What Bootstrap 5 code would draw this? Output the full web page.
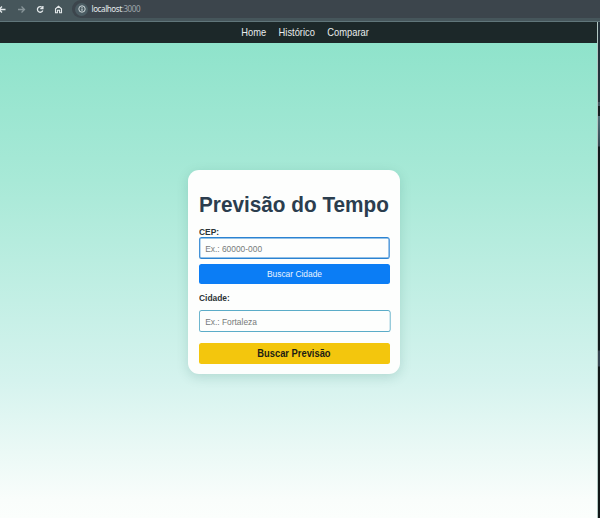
<!DOCTYPE html>
<html lang="pt-BR">
<head>
<meta charset="utf-8">
<meta name="viewport" content="width=device-width, initial-scale=1">
<title>Previsão do Tempo</title>
<link href="https://cdn.jsdelivr.net/npm/bootstrap@5.3.0/dist/css/bootstrap.min.css" rel="stylesheet">
<style>
body{font-family:"Liberation Sans",Arial,sans-serif;height:518px;background:#182222}
.browser-bar{height:22px;background:#46565b;border-bottom:1px solid #60767a;flex:none}
.browser-icons{width:72px;height:18px;padding-right:9px;color:#e4e9eb}
.browser-icons svg{width:9px;height:9px;overflow:visible;fill:none;stroke:currentColor;stroke-width:1.3}
.browser-icons .off{color:#879498}
.address{height:18px;background:#3c454c;border-radius:9px 0 0 9px;font:8px/18px "Noto Sans",sans-serif;letter-spacing:-.4px;color:#e5e9ec;padding-left:3px}
.address .info{width:13px;height:13px;border-radius:50%;background:#4b5c63;margin-right:3.5px}
.address .port{color:#a0a8ac}
.site{width:598px;border-right:1px solid #b2c8c3}
.menu{height:21px;background:#1c2829;padding-left:13.4px;font-size:10.1px;flex:none}
.menu-links{gap:13.5px;transform:scaleX(.924)}
.menu a{color:#e9eded}
.sky{background:linear-gradient(#8fe3cb 0,#a8e9d7 29%,#d5f3ee 71%,#f9fdfb 96%,#fbfefc 100%);padding-top:127px}
.edge{width:2px;background:linear-gradient(#24323a 0,#24323a 80px,#435961 80px,#435961 84px,#131d1f 84px,#131d1f 94px,#52717a 94px,#344750 124px,#11191b 125px,#11191b 328px,#34424e 329px,#34424e 344px,#101617 345px)}
.forecast{width:212px;height:204.3px;margin-left:188px;border:0;border-radius:11px;background:#fdfefd;box-shadow:0 3px 12px rgba(20,90,75,.17);padding:23px 10.5px 0}
h1{font-size:21.4px;line-height:25px;height:25px;font-weight:700;color:#2b3d4e;white-space:nowrap;transform:scaleX(.97);transform-origin:left}
.forecast label{font-size:9.5px;line-height:10px;font-weight:700;color:#2b3336;transform:scaleX(.884);transform-origin:left}
.forecast .zip-label{margin-top:9px}
.forecast .city-label{margin-top:8.5px;margin-bottom:.5px}
.forecast .form-control{height:22px;min-height:0;font-size:9.6px;line-height:18px;padding:0 6px;border-radius:2.8px/2.5px;background:#fdfefd;transform:scaleX(.875);transform-origin:left}
.forecast .form-control::placeholder{color:#777b7b;opacity:1}
.forecast .zip{border:1px solid #2b83d2;box-shadow:inset 0 0 0 .5px #2b83d2;width:218.3px}
.forecast .city{border:1px solid #5bacc8;width:219px;margin-top:7px}
.forecast .btn{padding:0;border:0;border-radius:2.5px}
.forecast .find-city span{display:inline-block;transform:scaleX(.875)}
.forecast .find-forecast span{display:inline-block;transform:scaleX(.918)}
.forecast .find-city{height:20px;margin-top:5px;font-size:9.6px;background:#0b7df5;color:#e9f4ff}
.forecast .find-forecast{height:21px;margin-top:11px;font-size:10.2px;font-weight:700;background:#f3c60d;color:#1c1d14}
</style>
<script src="https://cdn.jsdelivr.net/npm/bootstrap@5.3.0/dist/js/bootstrap.bundle.min.js" defer></script>
</head>
<body class="d-flex flex-column overflow-hidden">
<header class="browser-bar d-flex">
  <div class="browser-icons d-flex align-items-center justify-content-between">
    <svg viewBox="0 0 9 9"><path d="M5.5 4.5H-1M2 1.5l-3 3 3 3"/></svg>
    <svg class="off" viewBox="0 0 9 9"><path d="M0 4.5h6.5M3.5 1.5l3 3-3 3"/></svg>
    <svg viewBox="0 0 9 9"><path d="M6.5 2.8A2.8 2.8 0 1 0 6.8 5.6M6.9 1v2.7H4.3"/></svg>
    <svg viewBox="0 0 9 9"><path d="M1.5 7.7V3.8l3-2.5 3 2.5v3.9H5.6V5.2H3.4v2.5z" stroke-width="1.1"/></svg>
  </div>
  <div class="address d-flex align-items-center flex-grow-1">
    <span class="info d-flex align-items-center justify-content-center"><svg width="8" height="8" viewBox="0 0 8 8" fill="none" stroke="#dfe6e8"><circle cx="4" cy="4" r="3.2" stroke-width=".9"/><path d="M4 3.5v2.3M4 2v.9"/></svg></span>
    <span>localhost</span><span class="port">:3000</span>
  </div>
</header>
<div class="d-flex flex-grow-1">
  <div class="site d-flex flex-column">
    <nav class="menu d-flex justify-content-center align-items-center">
      <div class="menu-links d-flex">
        <a class="text-decoration-none" href="#">Home</a>
        <a class="text-decoration-none" href="#">Histórico</a>
        <a class="text-decoration-none" href="#">Comparar</a>
      </div>
    </nav>
    <main class="sky flex-grow-1">
      <form class="forecast card">
        <h1 class="mb-0">Previsão do Tempo</h1>
        <label class="zip-label" for="zip">CEP:</label>
        <input id="zip" class="form-control zip" placeholder="Ex.: 60000-000">
        <button type="button" class="btn find-city"><span>Buscar Cidade</span></button>
        <label class="city-label" for="city">Cidade:</label>
        <input id="city" class="form-control city" placeholder="Ex.: Fortaleza">
        <button type="button" class="btn find-forecast"><span>Buscar Previsão</span></button>
      </form>
    </main>
  </div>
  <div class="edge"></div>
</div>
</body>
</html>
